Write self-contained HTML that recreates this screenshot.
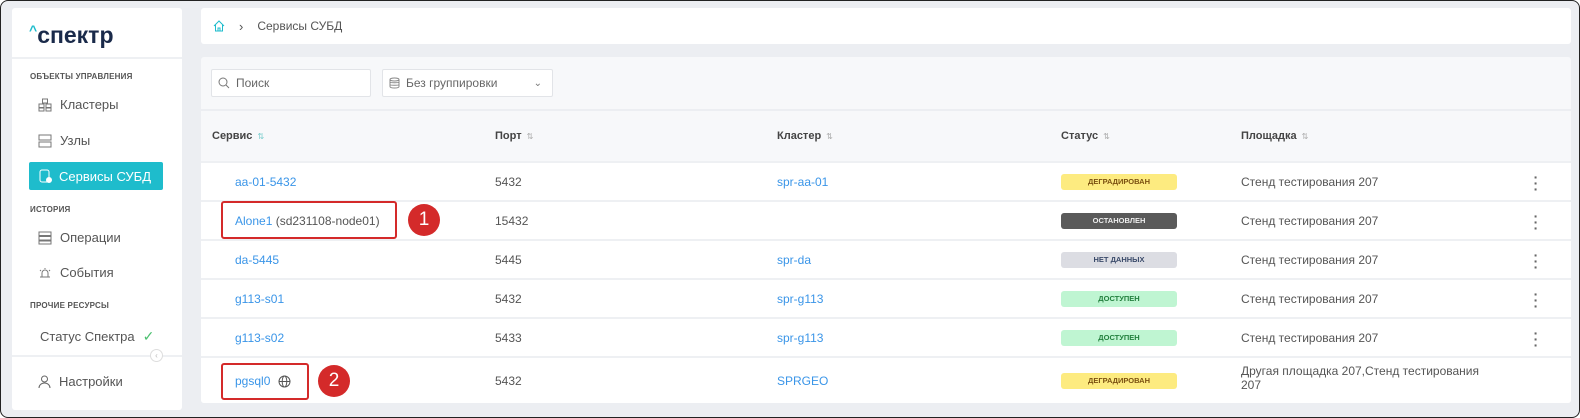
<!DOCTYPE html>
<html><head><meta charset="utf-8"><style>
*{box-sizing:border-box;margin:0;padding:0}
body{width:1580px;height:418px;overflow:hidden;font-family:"Liberation Sans",sans-serif;background:#fff}
.frame{position:absolute;left:0;top:0;width:1580px;height:418px;border:1.5px solid #222;border-radius:8px;background:#eceef2;overflow:hidden}
.side{position:absolute;left:11px;top:7px;width:170px;height:402px;background:#fff;border-radius:3px}
.logo{height:51px;border-bottom:2px solid #eef0f3;padding:14px 0 0 17px;font-size:23px;font-weight:bold;color:#1a2a4a;letter-spacing:0px}
.logo sup{color:#1ebccc;font-size:14px;vertical-align:8px}
.sec{font-size:8px;font-weight:bold;color:#555;padding-left:18px;letter-spacing:.2px}
.item{position:absolute;left:26px;font-size:13px;color:#555;display:flex;align-items:center;gap:8px}
.act{position:absolute;left:17px;top:154px;width:134px;height:28px;background:#1ebccc;border-radius:2px;color:#fff;font-size:13px;display:flex;align-items:center;padding-left:10px;gap:7px}
.bc{position:absolute;left:200px;top:7px;width:1370px;height:36px;background:#fff;border-radius:3px;font-size:12px;color:#555;display:flex;align-items:center;padding-left:12px}
.main{position:absolute;left:200px;top:56px;width:1370px;height:346px;background:#f7f8fa;border-radius:3px;overflow:hidden}
.inp{position:absolute;top:12px;height:28px;background:#fff;border:1px solid #e2e4e8;border-radius:2px;font-size:12px;color:#666;display:flex;align-items:center;padding-left:6px;gap:6px}
.th{position:absolute;top:73px;font-size:11px;font-weight:bold;color:#444}
.th i{font-style:normal;color:#aaa;font-size:8px;font-weight:normal;margin-left:5px}
.row{position:absolute;left:0;width:1370px;background:#fff;border-top:2px solid #eef0f3;font-size:12px;color:#555}
.row span{position:absolute}
.l{color:#3a95e8}
.b{position:absolute;left:860px;width:116px;height:16px;border-radius:3px;font-size:7.5px;font-weight:bold;text-align:center;line-height:16px}
.deg{background:#fdeb80;color:#7a5010}.st{background:#5a5a5a;color:#eee}.nd{background:#dcdde3;color:#3a4a6a}.ok{background:#bff5d2;color:#23803e}
.k{left:1332px;color:#666;font-size:14px;font-weight:bold;line-height:6px;width:6px;text-align:center}
.red{position:absolute;border:2.5px solid #d42a2a;border-radius:3px}
.num{position:absolute;width:32px;height:32px;border-radius:50%;background:#d42a2a;color:#fff;font-size:19px;text-align:center;line-height:32px}
</style></head><body><div class="frame">
<div class="side">
<div class="logo"><sup>^</sup>спектр</div>
<div class="sec" style="position:absolute;top:64px">ОБЪЕКТЫ УПРАВЛЕНИЯ</div>
<div class="item" style="top:89px"><svg width="14" height="14" viewBox="0 0 14 14" fill="none" stroke="#777"><rect x="4.5" y="1" width="5" height="4"/><rect x="1" y="6" width="5" height="3.5"/><rect x="8" y="6" width="5" height="3.5"/><rect x="1" y="10" width="5" height="3"/><rect x="8" y="10" width="5" height="3"/></svg>Кластеры</div>
<div class="item" style="top:125px"><svg width="14" height="14" viewBox="0 0 14 14" fill="none" stroke="#777"><rect x="1" y="1" width="12" height="5"/><rect x="1" y="8" width="12" height="5"/></svg>Узлы</div>
<div class="act"><svg width="13" height="14" viewBox="0 0 13 14" fill="none" stroke="#fff"><rect x="1" y="1" width="9" height="12" rx="2"/><circle cx="10" cy="11" r="2.5" fill="#fff"/></svg>Сервисы СУБД</div>
<div class="sec" style="position:absolute;top:197px">ИСТОРИЯ</div>
<div class="item" style="top:222px"><svg width="14" height="14" viewBox="0 0 14 14" fill="none" stroke="#777"><rect x="1" y="1" width="12" height="3.5"/><rect x="1" y="5.5" width="12" height="3.5"/><rect x="1" y="10" width="12" height="3"/></svg>Операции</div>
<div class="item" style="top:257px"><svg width="14" height="14" viewBox="0 0 14 14" fill="none" stroke="#777"><path d="M4 11V7a3 3 0 016 0v4zM2 11h10M7 2v1M2 4l1 1M12 4l-1 1"/></svg>События</div>
<div class="sec" style="position:absolute;top:293px">ПРОЧИЕ РЕСУРСЫ</div>
<div class="item" style="top:320px;left:28px">Статус Спектра <span style="color:#4cc070;font-size:14px">✓</span></div>
<div style="position:absolute;top:347px;left:0;width:170px;border-top:2px solid #eef0f3"></div>
<div style="position:absolute;top:341px;left:138px;width:13px;height:13px;border:1px solid #ddd;border-radius:50%;background:#fff;font-size:8px;color:#bbb;text-align:center;line-height:11px">‹</div>
<div class="item" style="top:366px"><svg width="13" height="13" viewBox="0 0 13 13" fill="none" stroke="#666"><circle cx="6.5" cy="4" r="3"/><path d="M1 13c0-3 2.5-5 5.5-5s5.5 2 5.5 5"/></svg>Настройки</div>
</div>
<div class="bc"><svg width="12" height="12" viewBox="0 0 12 12" fill="none" stroke="#1ebccc"><path d="M1 6L6 1l5 5M2.5 5v6h7V5M5 11V8h2v3"/></svg><span style="margin:0 14px 0 14px;font-size:13px">›</span>Сервисы СУБД</div>
<div class="main">
<div class="inp" style="left:10px;width:160px"><svg width="12" height="12" viewBox="0 0 12 12" fill="none" stroke="#777"><circle cx="5" cy="5" r="4"/><path d="M8 8l3 3"/></svg>Поиск</div>
<div class="inp" style="left:181px;width:171px"><svg width="11" height="12" viewBox="0 0 11 12" fill="none" stroke="#888"><ellipse cx="5.5" cy="2.5" rx="4.5" ry="1.5"/><path d="M1 2.5v7c0 1 2 1.5 4.5 1.5s4.5-.5 4.5-1.5v-7M1 5c0 1 9 1 9 0M1 7.5c0 1 9 1 9 0"/></svg>Без группировки<span style="position:absolute;right:10px;font-size:10px;color:#777">⌄</span></div>
<div style="position:absolute;top:52px;left:0;width:1370px;border-top:2px solid #eceef2"></div>
<div class="th" style="left:11px">Сервис<i style="color:#7cc">⇅</i></div>
<div class="th" style="left:294px">Порт<i>⇅</i></div>
<div class="th" style="left:576px">Кластер<i>⇅</i></div>
<div class="th" style="left:860px">Статус<i>⇅</i></div>
<div class="th" style="left:1040px">Площадка<i>⇅</i></div>

<div class="row" style="top:104px;height:39px"><span class="l" style="left:34px;top:12px">aa-01-5432</span><span style="left:294px;top:12px">5432</span><span class="l" style="left:576px;top:12px">spr-aa-01</span><span class="b deg" style="top:11px">ДЕГРАДИРОВАН</span><span style="left:1040px;top:12px">Стенд тестирования 207</span><span class="k" style="top:11px">·<br>·<br>·</span></div>
<div class="row" style="top:143px;height:39px"><span style="left:34px;top:12px"><span class="l" style="position:static">Alone1</span> (sd231108-node01)</span><span style="left:294px;top:12px">15432</span><span class="b st" style="top:11px">ОСТАНОВЛЕН</span><span style="left:1040px;top:12px">Стенд тестирования 207</span><span class="k" style="top:11px">·<br>·<br>·</span></div>
<div class="row" style="top:182px;height:39px"><span class="l" style="left:34px;top:12px">da-5445</span><span style="left:294px;top:12px">5445</span><span class="l" style="left:576px;top:12px">spr-da</span><span class="b nd" style="top:11px">НЕТ ДАННЫХ</span><span style="left:1040px;top:12px">Стенд тестирования 207</span><span class="k" style="top:11px">·<br>·<br>·</span></div>
<div class="row" style="top:221px;height:39px"><span class="l" style="left:34px;top:12px">g113-s01</span><span style="left:294px;top:12px">5432</span><span class="l" style="left:576px;top:12px">spr-g113</span><span class="b ok" style="top:11px">ДОСТУПЕН</span><span style="left:1040px;top:12px">Стенд тестирования 207</span><span class="k" style="top:11px">·<br>·<br>·</span></div>
<div class="row" style="top:260px;height:39px"><span class="l" style="left:34px;top:12px">g113-s02</span><span style="left:294px;top:12px">5433</span><span class="l" style="left:576px;top:12px">spr-g113</span><span class="b ok" style="top:11px">ДОСТУПЕН</span><span style="left:1040px;top:12px">Стенд тестирования 207</span><span class="k" style="top:11px">·<br>·<br>·</span></div>
<div class="row" style="top:299px;height:47px"><span class="l" style="left:34px;top:16px">pgsql0</span><svg style="position:absolute;left:77px;top:17px" width="13" height="13" viewBox="0 0 13 13" fill="none" stroke="#555"><circle cx="6.5" cy="6.5" r="5.5"/><ellipse cx="6.5" cy="6.5" rx="2.3" ry="5.5"/><path d="M1 6.5h11"/></svg><span style="left:294px;top:16px">5432</span><span class="l" style="left:576px;top:16px">SPRGEO</span><span class="b deg" style="top:15px">ДЕГРАДИРОВАН</span><span style="left:1040px;top:6px;line-height:14px">Другая площадка 207,Стенд тестирования<br>207</span></div>
</div>
<div class="red" style="left:220px;top:200px;width:176px;height:38px"></div>
<div class="num" style="left:407px;top:203px">1</div>
<div class="red" style="left:220px;top:362px;width:88px;height:37px"></div>
<div class="num" style="left:317px;top:364px">2</div>
</div></body></html>
